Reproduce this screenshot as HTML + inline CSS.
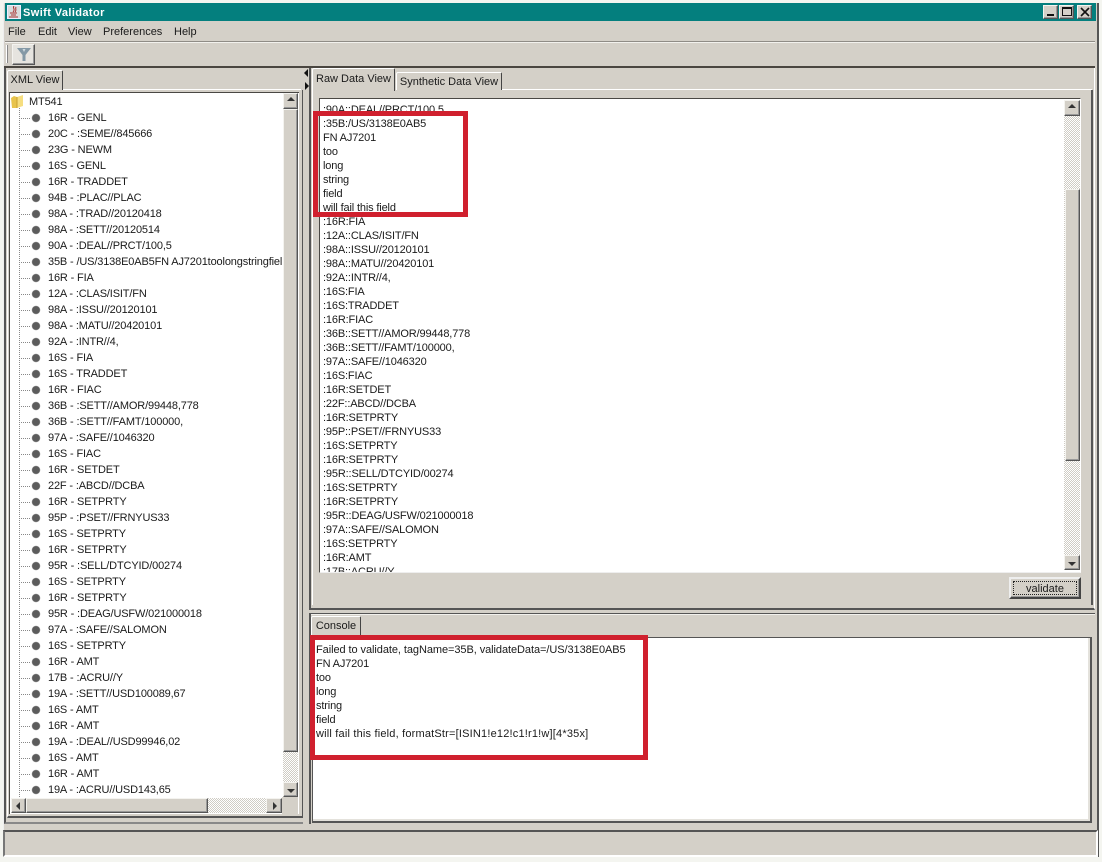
<!DOCTYPE html>
<html><head><meta charset="utf-8"><style>
html,body{margin:0;padding:0;width:1102px;height:862px;overflow:hidden;background:#f4f5f0}
body{position:relative;font:11px/16px "Liberation Sans",sans-serif;color:#1a1a1a}
div{position:absolute;box-sizing:border-box}
.w{background:#fff}
.btn{background:#d4d0c8;border:1px solid;border-color:#f4f3ef #555 #555 #f4f3ef;box-shadow:inset -1px -1px 0 #999}
.dith{background:repeating-conic-gradient(#cfccc4 0 25%,#fff 0 50%) 0 0/2px 2px}
.s{border:1px solid;border-color:#4a4844 #fff #fff #4a4844}
.tab{background:#d4d0c8;border:1px solid;border-color:#fff #444 transparent #fff;border-bottom:0;border-radius:2px 2px 0 0;text-align:center;white-space:nowrap}
.up,.dn,.lf,.rt{position:absolute;width:0;height:0;border:4px solid transparent}
.up{left:3px;top:3px;border-top:0;border-bottom-color:#333}
.dn{left:3px;top:6px;border-bottom:0;border-top-color:#333}
.lf{left:4px;top:3px;border-left:0;border-right-color:#333}
.rt{left:6px;top:3px;border-right:0;border-left-color:#333}
.red{border:5px solid #d0202e}
.tree{letter-spacing:-.15px}
.tree div{position:static;height:16px;padding-left:38px;white-space:nowrap;background:radial-gradient(circle 4.500px at 26px 8px,#5c5c5c 80%,transparent 100%),repeating-linear-gradient(90deg,#888 0 1px,transparent 1px 2px) 9px 8px/12px 1px no-repeat}
.tree div:first-child{padding-left:19px;background:none}
pre{position:absolute;margin:0;font:11px/14px "Liberation Sans",sans-serif;color:#1a1a1a;white-space:pre;letter-spacing:-.15px}
</style></head><body>
<div style="left:3px;top:3px;width:1096px;height:854px;background:#d4d0c8;border-right:2px solid #555;border-bottom:2px solid #555;border-left:1px solid #eee"></div>
<!-- title bar -->
<div style="left:5px;top:3px;width:1091px;height:18px;background:#047f7e"></div>
<div style="left:7px;top:5px;width:14px;height:14px;background:#d8dcdc;border:1px solid #eef"></div>
<svg style="position:absolute;left:8px;top:6px" width="12" height="12" viewBox="0 0 12 12"><path d="M6 0C4 2 8 3 5 6M8 1C7 3 9 4 7 6M2 7h7M3 9h5M1 11h9" stroke="#a33" stroke-width="1" fill="none"/></svg>
<div style="left:23px;top:5px;color:#fff;font-weight:bold;letter-spacing:.4px;white-space:nowrap">Swift Validator</div>
<div class="btn" style="left:1043px;top:5px;width:15px;height:14px"><div style="left:3px;top:8px;width:7px;height:2px;background:#111"></div></div>
<div class="btn" style="left:1059px;top:5px;width:15px;height:14px"><div style="left:2px;top:1px;width:10px;height:9px;border:1px solid #111;border-top-width:2px"></div></div>
<div class="btn" style="left:1077px;top:5px;width:15px;height:14px"><svg style="position:absolute;left:2px;top:1px" width="10" height="10"><path d="M1 1L9 9M9 1L1 9" stroke="#111" stroke-width="1.6"/></svg></div>
<!-- menu -->
<div style="left:8px;top:24px">File</div><div style="left:38px;top:24px">Edit</div><div style="left:68px;top:24px">View</div><div style="left:103px;top:24px;white-space:nowrap">Preferences</div><div style="left:174px;top:24px">Help</div>
<div style="left:5px;top:41px;width:1090px;height:1px;background:#8f8c86"></div>
<div style="left:5px;top:42px;width:1090px;height:1px;background:#f2f1ed"></div>
<!-- toolbar -->
<div style="left:6px;top:45px;width:2px;height:18px;border-left:1px solid #fff;border-right:1px solid #888"></div>
<div class="btn" style="left:12px;top:44px;width:23px;height:21px;background:#e6e4df"></div>
<svg style="position:absolute;left:15px;top:46px" width="18" height="17" viewBox="0 0 18 17"><path d="M2 2h14L10.500 9v6h-3V9z" fill="#8499a6"/><path d="M7.500 3h3L9 6z" fill="#cfdae0"/></svg>
<div style="left:4px;top:66px;width:1091px;height:2px;background:#4a4640"></div>
<!-- left panel -->
<div style="left:4px;top:68px;width:299px;height:756px;border-left:2px solid #555;border-bottom:2px solid #888"></div>
<div class="tab" style="left:7px;top:70px;width:56px;height:20px;line-height:18px">XML View</div>
<div style="left:63px;top:89px;width:238px;height:1px;background:#fff"></div>
<div style="left:7px;top:90px;width:296px;height:728px;border-left:1px solid #fff;border-right:1px solid #555;border-bottom:2px solid #555"></div>
<div class="w s" style="left:9px;top:92px;width:290px;height:722px;border-right:0;border-bottom:0"></div>
<div style="left:19px;top:108px;width:1px;height:689px;background:repeating-linear-gradient(#888 0 1px,transparent 1px 2px)"></div>
<svg style="position:absolute;left:10px;top:94px" width="15" height="15" viewBox="0 0 15 15"><path d="M1 4l3-2 3 1v11H2z" fill="#e8c44c"/><path d="M7 3l6-2v11l-6 2z" fill="#f6de80"/><path d="M7 3v11" stroke="#c8a030"/></svg>
<div class="tree" style="left:10px;top:94px;width:272px;height:703px;overflow:hidden">
<div>MT541</div><div>16R - GENL</div><div>20C - :SEME//845666</div><div>23G - NEWM</div><div>16S - GENL</div><div>16R - TRADDET</div><div>94B - :PLAC//PLAC</div><div>98A - :TRAD//20120418</div><div>98A - :SETT//20120514</div><div>90A - :DEAL//PRCT/100,5</div><div>35B - /US/3138E0AB5FN AJ7201toolongstringfieldwill</div><div>16R - FIA</div><div>12A - :CLAS/ISIT/FN</div><div>98A - :ISSU//20120101</div><div>98A - :MATU//20420101</div><div>92A - :INTR//4,</div><div>16S - FIA</div><div>16S - TRADDET</div><div>16R - FIAC</div><div>36B - :SETT//AMOR/99448,778</div><div>36B - :SETT//FAMT/100000,</div><div>97A - :SAFE//1046320</div><div>16S - FIAC</div><div>16R - SETDET</div><div>22F - :ABCD//DCBA</div><div>16R - SETPRTY</div><div>95P - :PSET//FRNYUS33</div><div>16S - SETPRTY</div><div>16R - SETPRTY</div><div>95R - :SELL/DTCYID/00274</div><div>16S - SETPRTY</div><div>16R - SETPRTY</div><div>95R - :DEAG/USFW/021000018</div><div>97A - :SAFE//SALOMON</div><div>16S - SETPRTY</div><div>16R - AMT</div><div>17B - :ACRU//Y</div><div>19A - :SETT//USD100089,67</div><div>16S - AMT</div><div>16R - AMT</div><div>19A - :DEAL//USD99946,02</div><div>16S - AMT</div><div>16R - AMT</div><div>19A - :ACRU//USD143,65</div>
</div>
<!-- left scrollbars -->
<div class="dith" style="left:283px;top:93px;width:15px;height:704px"></div>
<div class="btn" style="left:283px;top:93px;width:15px;height:16px"><i class="up"></i></div>
<div class="btn" style="left:283px;top:109px;width:15px;height:643px"></div>
<div class="btn" style="left:283px;top:782px;width:15px;height:15px"><i class="dn"></i></div>
<div class="dith" style="left:11px;top:798px;width:271px;height:15px"></div>
<div class="btn" style="left:11px;top:798px;width:15px;height:15px"><i class="lf"></i></div>
<div class="btn" style="left:26px;top:798px;width:182px;height:15px"></div>
<div class="btn" style="left:266px;top:798px;width:16px;height:15px"><i class="rt"></i></div>
<div style="left:282px;top:797px;width:16px;height:17px;background:#d4d0c8"></div>
<!-- splitter arrows -->
<svg style="position:absolute;left:304px;top:68px" width="6" height="22"><path d="M0 5L4 1V9zM1 14L5 18L1 22z" fill="#111"/></svg>
<!-- right top panel -->
<div style="left:309px;top:68px;width:786px;height:542px;border-left:2px solid #555;border-bottom:2px solid #555;border-right:1px solid #fff"></div>
<div class="tab" style="left:312px;top:68px;width:83px;height:23px;line-height:21px;z-index:2">Raw Data View</div>
<div class="tab" style="left:396px;top:72px;width:106px;height:18px;line-height:18px">Synthetic Data View</div>
<div style="left:502px;top:89px;width:590px;height:1px;background:#fff"></div>
<div style="left:312px;top:90px;width:1px;height:515px;background:#fff"></div>
<div style="left:1091px;top:90px;width:2px;height:515px;background:#555"></div>
<div class="w s" style="left:319px;top:98px;width:762px;height:475px;border-bottom:1px solid #eee"></div>
<div class="dith" style="left:1064px;top:100px;width:16px;height:470px"></div>
<div class="btn" style="left:1064px;top:100px;width:16px;height:16px"><i class="up"></i></div>
<div class="btn" style="left:1065px;top:189px;width:15px;height:272px"></div>
<div class="btn" style="left:1064px;top:555px;width:16px;height:15px"><i class="dn"></i></div>
<div style="left:320px;top:104px;width:740px;height:468px;overflow:hidden"><pre style="left:3px;top:-1px">:90A::DEAL//PRCT/100,5
:35B:/US/3138E0AB5
FN AJ7201
too
long
string
field
will fail this field
:16R:FIA
:12A::CLAS/ISIT/FN
:98A::ISSU//20120101
:98A::MATU//20420101
:92A::INTR//4,
:16S:FIA
:16S:TRADDET
:16R:FIAC
:36B::SETT//AMOR/99448,778
:36B::SETT//FAMT/100000,
:97A::SAFE//1046320
:16S:FIAC
:16R:SETDET
:22F::ABCD//DCBA
:16R:SETPRTY
:95P::PSET//FRNYUS33
:16S:SETPRTY
:16R:SETPRTY
:95R::SELL/DTCYID/00274
:16S:SETPRTY
:16R:SETPRTY
:95R::DEAG/USFW/021000018
:97A::SAFE//SALOMON
:16S:SETPRTY
:16R:AMT
:17B::ACRU//Y</pre></div>
<div class="btn" style="left:1009px;top:577px;width:72px;height:22px;border:2px solid;border-color:#eee #444 #444 #eee;text-align:center;line-height:20px"><div style="left:2px;top:2px;right:2px;bottom:2px;border:1px dotted #222"></div>validate</div>
<!-- console -->
<div style="left:309px;top:613px;width:786px;height:1px;background:#555"></div>
<div style="left:309px;top:614px;width:786px;height:1px;background:#f2f1ed"></div>
<div style="left:309px;top:613px;width:2px;height:211px;background:#555"></div>
<div class="tab" style="left:311px;top:616px;width:50px;height:20px;line-height:18px">Console</div>
<div class="w" style="left:312px;top:637px;width:780px;height:186px;border:1px solid #555;border-right:2px solid #555;border-bottom:2px solid #555"></div>
<div style="left:1088px;top:638px;width:2px;height:183px;background:#e4e2dc"></div>
<div style="left:313px;top:819px;width:777px;height:2px;background:#e4e2dc"></div>
<pre style="left:316px;top:643px"><span style="letter-spacing:-.07px">Failed to validate, tagName=35B, validateData=/US/3138E0AB5</span>
FN AJ7201
too
long
string
field
<span style="letter-spacing:.19px">will fail this field, formatStr=[ISIN1!e12!c1!r1!w][4*35x]</span></pre>
<!-- red boxes -->
<div class="red" style="left:313px;top:111px;width:155px;height:106px"></div>
<div class="red" style="left:310px;top:635px;width:338px;height:125px"></div>
<!-- status bar -->
<div style="left:3px;top:830px;width:1095px;height:27px;border:2px solid;border-color:#555 #fff #fff #777"></div>
</body></html>
